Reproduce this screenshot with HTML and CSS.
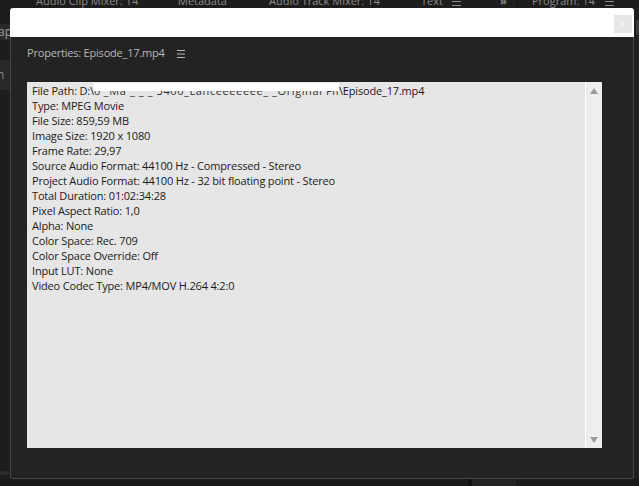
FILE: index.html
```html
<!DOCTYPE html>
<html>
<head>
<meta charset="utf-8">
<link rel="stylesheet" href="styles.css">
</head>
<body>
<div class="stage">
  <div class="tabs">
    <span class="tab t1">Audio Clip Mixer: 14</span>
    <span class="tab t2">Metadata</span>
    <span class="tab t3">Audio Track Mixer: 14</span>
    <span class="tab t4">Text</span>
    <span class="tab t5"><svg width="9" height="9" viewBox="0 0 9 9"><path d="M0 0.5H9M0 4.5H9M0 8.5H9" stroke="#8c8c8c" stroke-width="1"/></svg></span>
    <span class="tab t6">&raquo;</span>
    <span class="divider"></span>
    <span class="tab t7">Program: 14</span>
    <span class="tab t8"><svg width="9" height="9" viewBox="0 0 9 9"><path d="M0 0.5H9M0 4.5H9M0 8.5H9" stroke="#8c8c8c" stroke-width="1"/></svg></span>
  </div>
  <div class="middle">
    <div class="leftstrip">
      <div class="ls-gap1"></div>
      <div class="ls-tab"><span>ap</span></div>
      <div class="ls-gap2"></div>
      <div class="ls-panel"><span>n</span></div>
      <div class="ls-fill"></div>
      <div class="ls-line"></div>
      <div class="ls-gap3"></div>
    </div>
    <div class="dialog">
      <div class="titlebar">
        <div class="close">x</div>
      </div>
      <div class="body">
        <div class="panel-title">Properties: Episode_17.mp4<svg class="menu" width="8" height="8" viewBox="0 0 8 8"><path d="M0 0.5H8M0 4H8M0 7.5H8" stroke="#b8b8b8" stroke-width="1"/></svg></div>
        <div class="textarea">
          <div class="lines">
            <div class="line">File Path: D:\<span class="redact"><span class="frag">0'_Ma  _ _ _ 3400_Lanceeeeeee_ _Original Files</span><span class="cover"></span></span>\Episode_17.mp4</div>
            <div class="line">Type: MPEG Movie</div>
            <div class="line">File Size: 859,59 MB</div>
            <div class="line">Image Size: 1920 x 1080</div>
            <div class="line">Frame Rate: 29,97</div>
            <div class="line">Source Audio Format: 44100 Hz - Compressed - Stereo</div>
            <div class="line">Project Audio Format: 44100 Hz - 32 bit floating point - Stereo</div>
            <div class="line">Total Duration: 01:02:34:28</div>
            <div class="line">Pixel Aspect Ratio: 1,0</div>
            <div class="line">Alpha: None</div>
            <div class="line">Color Space: Rec. 709</div>
            <div class="line">Color Space Override: Off</div>
            <div class="line">Input LUT: None</div>
            <div class="line">Video Codec Type: MP4/MOV H.264 4:2:0</div>
          </div>
          <div class="scrollbar">
            <span class="arrow up"></span>
            <span class="arrow down"></span>
          </div>
        </div>
      </div>
    </div>
    <div class="rightstrip">
      <div class="rs-bar"></div>
    </div>
  </div>
  <div class="bottom">
    <span class="b1"></span><span class="b2"></span><span class="b3"></span>
  </div>
</div>
</body>
</html>
```
FILE: styles.css
```css
html, body {
  margin: 0;
  padding: 0;
  background: #1d1d1d;
  width: 639px;
  height: 486px;
  overflow: hidden;
  font-family: "Open Sans", "Noto Sans", sans-serif;
}
.stage {
  display: flex;
  flex-direction: column;
  width: 639px;
  height: 486px;
}
.tabs {
  height: 8px;
  flex: none;
  overflow: hidden;
  display: flex;
  align-items: flex-end;
  padding-left: 36px;
  font-size: 11px;
  color: #8c8c8c;
  line-height: 16px;
}
.tab {
  flex: none;
  margin-bottom: -1px;
  white-space: nowrap;
}
.t1 { width: 142px; }
.t2 { width: 91px; }
.t3 { width: 152px; }
.t4 { width: 31px; }
.t5 { width: 48px; margin-bottom: 0; height: 8px; line-height: 0; }
.t5 svg, .t8 svg { margin-top: -3px; }
.t6 { width: 17px; font-weight: bold; }
.divider { width: 1px; height: 8px; background: #111; margin-right: 14px; align-self: stretch; }
.t7 { width: 73px; }
.t8 { margin-bottom: 0; height: 8px; line-height: 0; }

.middle {
  display: flex;
  height: 471px;
  flex: none;
}
.leftstrip {
  width: 10px;
  flex: none;
  display: flex;
  flex-direction: column;
  overflow: hidden;
}
.ls-gap1 { height: 16px; }
.ls-tab { height: 16px; background: #2a2a2a; color: #9a9a9a; font-size: 12px; line-height: 16px; }
.ls-tab span { margin-left: -2px; }
.ls-gap2 { height: 20px; }
.ls-panel { height: 30px; background: #282828; color: #8a8a8a; font-size: 12px; line-height: 30px; }
.ls-panel span { margin-left: -3px; }
.ls-fill { flex: 1; }
.ls-line { height: 4px; background: #2b2b2b; width: 9px; }
.ls-gap3 { height: 4px; }

.dialog {
  width: 624px;
  flex: none;
  display: flex;
  flex-direction: column;
}
.titlebar {
  height: 29px;
  background: #ffffff;
  border-radius: 3px 3px 0 0;
  display: flex;
  justify-content: flex-end;
  align-items: flex-start;
  padding: 7px 2px 0 0;
  box-sizing: border-box;
}
.close {
  width: 18px;
  height: 18px;
  background: #e6e6e6;
  color: #f8f8f8;
  font-family: "DejaVu Sans", sans-serif;
  font-size: 10px;
  line-height: 17px;
  text-align: center;
}
.body {
  height: 442px;
  box-sizing: border-box;
  background: #232323;
  border: 1px solid #474747;
  border-top: none;
  border-radius: 0 0 3px 3px;
  padding: 0 31px 0 16px;
  display: flex;
  flex-direction: column;
}
.panel-title {
  height: 45px;
  box-sizing: border-box;
  padding-top: 8px;
  font-size: 11px;
  letter-spacing: -0.2px;
  color: #b8b8b8;
  line-height: 16px;
}
.menu { margin-left: 12px; vertical-align: -1px; }
.textarea {
  height: 366px;
  background: #e6e6e6;
  border-radius: 0 2px 0 0;
  display: flex;
}
.lines {
  flex: 1;
  padding: 1px 0 0 5px;
  font-size: 11px;
  letter-spacing: -0.17px;
  line-height: 15px;
  color: #1a1a1a;
  white-space: nowrap;
  overflow: hidden;
}
.redact {
  position: relative;
  display: inline-block;
  width: 245px;
  overflow: hidden;
  vertical-align: top;
  height: 15px;
}
.frag { color: #333; letter-spacing: 0.6px; }
.cover {
  position: absolute;
  left: 0;
  top: 0;
  width: 100%;
  height: 8px;
  background: #ffffff;
}
.scrollbar {
  width: 17px;
  flex: none;
  background: #eeeeee;
  border-left: 1px solid #ffffff;
  display: flex;
  flex-direction: column;
  justify-content: space-between;
  align-items: center;
  padding: 6px 0 5px;
  box-sizing: border-box;
}
.arrow {
  width: 0;
  height: 0;
  border-left: 4px solid transparent;
  border-right: 4px solid transparent;
}
.arrow.up { border-bottom: 6px solid #9a9a9a; }
.arrow.down { border-top: 6px solid #9a9a9a; }

.rightstrip {
  flex: 1;
  box-sizing: border-box;
  background: #1f1f1f;
  border-left: 2px solid #1d1d1d;
}
.rs-bar {
  margin-top: 12px;
  height: 15px;
  background: #3a3a3a;
}
.bottom {
  height: 7px;
  flex: none;
  display: flex;
  background: #1b1b1b;
}
.b1 { width: 468px; }
.b2 { width: 4px; background: #121212; }
.b3 { width: 44px; background: #232323; }
```
